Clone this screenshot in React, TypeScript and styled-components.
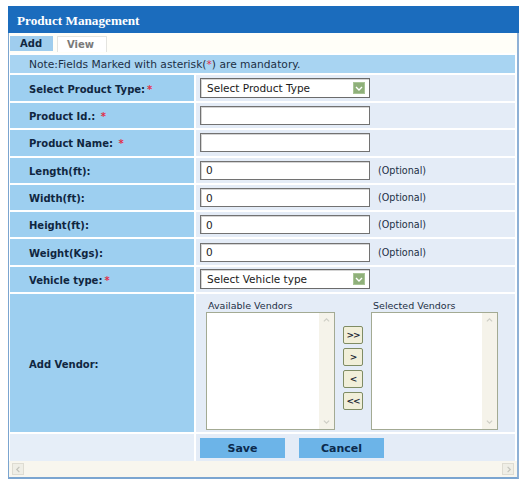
import React from "react";
import styled, { createGlobalStyle } from "styled-components";

const GlobalStyle = createGlobalStyle`
  html, body { margin: 0; padding: 0; background: #ffffff; }
  body { font-family: "DejaVu Sans", Verdana, sans-serif; }
  * { box-sizing: border-box; }
`;

const Page = styled.div`
  padding: 6px 0 0 8px;
`;

const Frame = styled.div`
  width: 511px;
  background: #fffef8;
  border-left: 1px solid #7ba5d0;
  border-right: 2px solid #8fb1d6;
  border-bottom: 2px solid #7ba5d0;
`;

const Header = styled.div`
  height: 27px;
  margin: 0 -2px 0 -1px;
  background: #1b6cbd;
  color: #ffffff;
  font-family: "Liberation Serif", "Times New Roman", serif;
  font-weight: bold;
  font-size: 13.2px;
  display: flex;
  align-items: center;
  padding: 2px 0 0 9px;
`;

const TabBar = styled.div`
  height: 20px;
  display: flex;
  align-items: flex-start;
  gap: 4px;
  padding: 3px 0 0 1px;
`;

const Tab = styled.div<{ $active?: boolean }>`
  height: ${(p) => (p.$active ? "15px" : "16px")};
  width: ${(p) => (p.$active ? "43px" : "50px")};
  padding-left: ${(p) => (p.$active ? "10px" : "9px")};
  display: flex;
  align-items: center;
  font-size: 10px;
  font-weight: bold;
  color: ${(p) => (p.$active ? "#10263f" : "#7a7a7a")};
  background: ${(p) => (p.$active ? "#9fcdee" : "#ffffff")};
  border: ${(p) => (p.$active ? "none" : "1px solid #e4e4e0")};
  border-bottom: none;
`;

const FormGrid = styled.div`
  display: grid;
  grid-template-columns: 184px 319px;
  grid-template-rows: 18px 26px repeat(7, 25.3px) 138px 27px;
  gap: 2px;
  padding: 2px 2px 0 1px;
  background: #ffffff;
`;

const NoteCell = styled.div`
  grid-column: 1 / span 2;
  background: #a8d4f2;
  color: #1c2f45;
  font-size: 10.7px;
  display: flex;
  align-items: center;
  padding-left: 19px;
`;

const LabelCell = styled.div<{ $plain?: boolean }>`
  background: ${(p) => (p.$plain ? "#e6eef8" : "#9dcff0")};
  color: #10263f;
  font-size: 10px;
  font-weight: bold;
  display: flex;
  align-items: center;
  padding: 2px 0 0 19px;
`;

const FieldCell = styled.div`
  background: #e4ecf7;
  display: flex;
  align-items: center;
  padding-left: 4px;
  gap: 8px;
`;

const Star = styled.span`
  color: #e0304a;
  margin-left: 2px;
`;

const NoteStar = styled.span`
  color: #e0304a;
`;

const TextBox = styled.div`
  width: 170px;
  height: 19px;
  background: #ffffff;
  border: 1px solid #727272;
  box-shadow: inset 1px 1px 0 #d4d4d4;
  font-size: 10.5px;
  color: #222;
  display: flex;
  align-items: center;
  padding-left: 5px;
`;

const SelectBox = styled.div`
  width: 170px;
  height: 20px;
  background: #ffffff;
  border: 1px solid #6b6b6b;
  box-shadow: inset 1px 1px 0 #d4d4d4;
  font-size: 10.5px;
  color: #1a1a1a;
  display: flex;
  align-items: center;
  justify-content: space-between;
  padding: 0 4px 0 6px;
`;

const SelectArrow = styled.span`
  width: 12px;
  height: 12px;
  background: #8fb07a;
  border: 1px solid #a9c596;
  display: flex;
  align-items: center;
  justify-content: center;
`;

const Optional = styled.span`
  font-size: 9.6px;
  color: #1c2f45;
`;

const VendorCell = styled.div`
  background: #e4ecf7;
  display: grid;
  grid-template-columns: 129px 20px 127px;
  column-gap: 8px;
  align-items: center;
  padding: 6px 0 2px 10px;
`;

const ListColumn = styled.div`
  display: flex;
  flex-direction: column;
  align-self: stretch;
`;

const ListTitle = styled.div`
  font-size: 9.5px;
  color: #1c2f45;
  height: 12px;
  line-height: 11px;
  padding-left: 2px;
`;

const ListBox = styled.div`
  height: 118px;
  background: #ffffff;
  border: 1px solid #a3aa93;
  display: flex;
  justify-content: flex-end;
`;

const ListScroll = styled.div`
  width: 15px;
  background: #f5f3ea;
  display: flex;
  flex-direction: column;
  justify-content: space-between;
  align-items: center;
  padding: 4px 0;
`;

const MoveButtons = styled.div`
  display: flex;
  flex-direction: column;
  gap: 4px;
  margin-top: 6px;
`;

const MoveButton = styled.div`
  width: 20px;
  height: 18px;
  background: #f1efd9;
  border: 1px solid #7f8c64;
  border-radius: 2px;
  font-size: 9px;
  font-weight: bold;
  color: #1f2a36;
  display: flex;
  align-items: center;
  justify-content: center;
  letter-spacing: -1px;
`;

const ButtonCell = styled.div`
  background: #e4ecf7;
  display: flex;
  align-items: center;
  gap: 14px;
  padding: 1px 0 0 4px;
`;

const ActionButton = styled.div<{ $w: number }>`
  width: ${(p) => p.$w}px;
  height: 20px;
  background: #6cb4e8;
  color: #0b2a4c;
  font-size: 11px;
  font-weight: bold;
  display: flex;
  align-items: center;
  justify-content: center;
`;

const HScroll = styled.div`
  height: 16px;
  background: #f8f6ee;
  display: flex;
  align-items: center;
  justify-content: space-between;
  padding: 0 3px 0 3px;
`;

const ScrollBtn = styled.div`
  width: 12px;
  height: 12px;
  background: #efeee6;
  border: 1px solid #dedcd2;
  display: flex;
  align-items: center;
  justify-content: center;
`;

const Chevron = ({ dir, color = "#c4c4bc", size = 7 }: { dir: "up" | "down" | "left" | "right"; color?: string; size?: number }) => {
  const paths: Record<string, string> = {
    up: "M1 5 L4 2 L7 5",
    down: "M1 3 L4 6 L7 3",
    left: "M5 1 L2 4 L5 7",
    right: "M3 1 L6 4 L3 7",
  };
  return (
    <svg width={size} height={size} viewBox="0 0 8 8">
      <path d={paths[dir]} fill="none" stroke={color} strokeWidth="1.4" />
    </svg>
  );
};

const Label = ({ text, required, space }: { text: string; required?: boolean; space?: boolean }) => (
  <LabelCell>
    {text}
    {required && <Star>{space ? "\u00a0*" : "*"}</Star>}
  </LabelCell>
);

const Select = ({ text }: { text: string }) => (
  <SelectBox>
    <span>{text}</span>
    <SelectArrow>
      <Chevron dir="down" color="#ffffff" size={8} />
    </SelectArrow>
  </SelectBox>
);

const VendorList = ({ title }: { title: string }) => (
  <ListColumn>
    <ListTitle>{title}</ListTitle>
    <ListBox>
      <ListScroll>
        <Chevron dir="up" color="#cfcfc6" />
        <Chevron dir="down" color="#cfcfc6" />
      </ListScroll>
    </ListBox>
  </ListColumn>
);

const dims = ["Length(ft):", "Width(ft):", "Height(ft):", "Weight(Kgs):"];

export default function App() {
  return (
    <>
      <GlobalStyle />
      <Page>
        <Frame>
          <Header>Product Management</Header>
          <TabBar>
            <Tab $active>Add</Tab>
            <Tab>View</Tab>
          </TabBar>
          <FormGrid>
            <NoteCell>
              Note:Fields Marked with asterisk(<NoteStar>*</NoteStar>) are mandatory.
            </NoteCell>

            <Label text="Select Product Type:" required />
            <FieldCell>
              <Select text="Select Product Type" />
            </FieldCell>

            <Label text="Product Id.:" required space />
            <FieldCell>
              <TextBox />
            </FieldCell>

            <Label text="Product Name:" required space />
            <FieldCell>
              <TextBox />
            </FieldCell>

            {dims.map((d) => (
              <React.Fragment key={d}>
                <Label text={d} />
                <FieldCell>
                  <TextBox>0</TextBox>
                  <Optional>(Optional)</Optional>
                </FieldCell>
              </React.Fragment>
            ))}

            <Label text="Vehicle type:" required />
            <FieldCell>
              <Select text="Select Vehicle type" />
            </FieldCell>

            <Label text="Add Vendor:" />
            <VendorCell>
              <VendorList title="Available Vendors" />
              <MoveButtons>
                <MoveButton>&gt;&gt;</MoveButton>
                <MoveButton>&gt;</MoveButton>
                <MoveButton>&lt;</MoveButton>
                <MoveButton>&lt;&lt;</MoveButton>
              </MoveButtons>
              <VendorList title="Selected Vendors" />
            </VendorCell>

            <LabelCell $plain />
            <ButtonCell>
              <ActionButton $w={85}>Save</ActionButton>
              <ActionButton $w={85}>Cancel</ActionButton>
            </ButtonCell>
          </FormGrid>
          <HScroll>
            <ScrollBtn>
              <Chevron dir="left" />
            </ScrollBtn>
            <ScrollBtn>
              <Chevron dir="right" />
            </ScrollBtn>
          </HScroll>
        </Frame>
      </Page>
    </>
  );
}
